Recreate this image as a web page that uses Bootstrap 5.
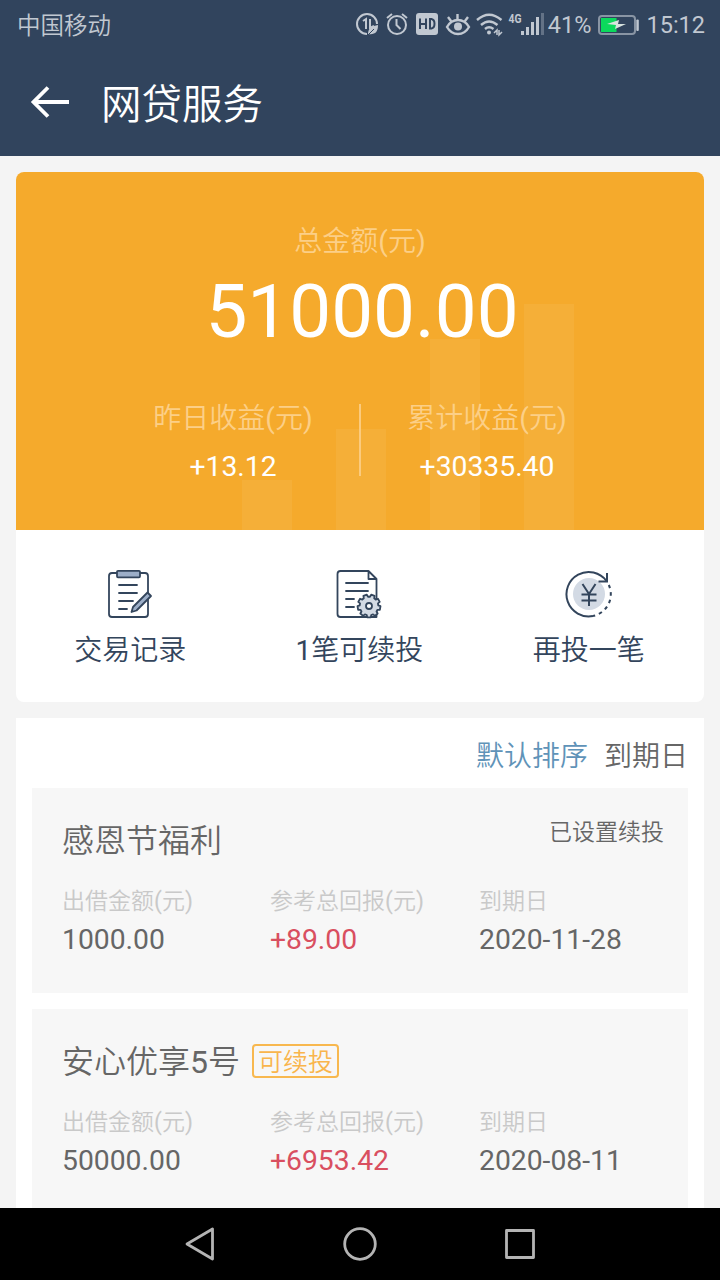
<!DOCTYPE html>
<html lang="zh-CN">
<head>
<meta charset="utf-8">
<meta name="viewport" content="width=device-width, initial-scale=1">
<title>网贷服务</title>
<link href="https://cdn.jsdelivr.net/npm/bootstrap@5.3.0/dist/css/bootstrap.min.css" rel="stylesheet">
<style>
  :root { --navy: #31445d; --amber: #f5aa2c; }
  body { font-family: Roboto, "Noto Sans CJK SC", sans-serif; font-weight: 400; background: #f4f4f4; color: #666; width: 720px; height: 1280px; }
  svg { display: block; flex: none; }
  .cjk { font-weight: 350; }
  .num { font-weight: 400; }
  .status-strip { height: 50px; padding: 0 15px 0 17px; color: #c1c8d1; font-size: 23.5px; line-height: 51px; background: var(--navy); }
  .status-strip .cjk { line-height: 53px; }
  .title-strip { height: 106px; background: var(--navy); padding-left: 30px; gap: 31px; color: #fff; }
  .title-strip svg { margin-bottom: 2px; }
  .title-strip h1 { font-size: 40.5px; line-height: 106px; padding-top: 4px; }
  .panel { margin: 16px 16px 0; background: #fff; }
  .summary { border-radius: 8px; height: 530px; }
  .hero { height: 358px; background: var(--amber); color: #fff; padding-top: 49px; }
  .hero-label { color: #fccf87; font-size: 28px; line-height: 42px; }
  .hero-total { font-size: 74.6px; line-height: 97px; padding-left: 4px; }
  .hero-bars { inset: 0 130px 0 226px; gap: 44px; }
  .hero-bars span { width: 50px; background: rgba(255,255,255,.06); }
  .hero-split { margin-top: 44px; }
  .hero-split .half { width: 252px; margin-top: -6px; }
  .hero-split .rule { width: 2px; height: 72px; background: #fbcb7e; }
  .hero-value { font-size: 28.3px; line-height: 40px; margin-top: 7px; }
  .actions { height: 172px; padding-top: 38px; color: #33455c; font-size: 28px; line-height: 42px; }
  .actions svg { margin-bottom: 10px; }
  .actions .col > span { margin-left: -1px; }
  .sort { height: 70px; padding-right: 16px; gap: 16px; font-size: 28px; line-height: 77px; }
  .sort .current { color: #5f93b8; }
  .loan { margin: 0 16px 16px; background: #f7f7f7; height: 205px; padding: 31px 24px 0 30px; }
  .loan-name { font-size: 32px; line-height: 44px; height: 42px; }
  .loan-state { font-size: 23px; line-height: 28px; }
  .loan-tag { border: 2px solid #f8b84f; border-radius: 4px; color: #f9b54c; font-size: 25px; line-height: 34px; height: 34px; width: 87px; margin: 4px 0 0 12px; }
  .loan-grid { display: grid; grid-template-columns: 208px 209px 1fr; margin-top: 23px; }
  .loan-grid dt { color: #c9c9c9; font-size: 23px; line-height: 36px; }
  .loan-grid dd { font-size: 28.3px; line-height: 40px; margin: 0; }
  .gain { color: #d94f60; }
  .sys-nav { height: 72px; background: #000; }
</style>
</head>
<body class="d-flex flex-column overflow-hidden m-0">
<header class="flex-shrink-0">
  <div class="status-strip d-flex justify-content-between">
    <span class="cjk">中国移动</span>
    <div class="d-flex align-items-center">
      <svg width="190" height="50" viewBox="350 0 190 50" fill="none" stroke="#c1c8d1" stroke-width="2">
        <path d="M367 34A10 10 0 1 1 377 24" /><path d="M363 21l3-2v10M370 19v9l4-2" />
        <path d="M368 34c0-6 4-8 10-9 0 7-3 10-10 9z" fill="#c1c8d1" stroke="none"/><path d="M368 35l6-6" stroke="#31445d" stroke-width="1"/>
        <circle cx="397" cy="25" r="9"/><path d="M396.500 19v6l4 4M387 18l5-4M407 18l-5-4"/>
        <rect x="416" y="13" width="22" height="22" rx="3" fill="#c1c8d1" stroke="none"/>
        <path d="M420 18.500v10.500M426 18.500v10.500M420 24h6M430 19v9.500h1.500q3-.5 3-4.700t-3-4.800z" stroke="#31445d"/>
        <path d="M447 27q4-7 11-7t11 7q-4 7-11 7t-11-7zM457.500 14v5M448 17l3 4M468 17l-3 4" stroke-width="2.400"/><circle cx="458" cy="26.500" r="4" fill="#c1c8d1" stroke="none"/>
        <path d="M477 20q12-10.500 24.500 0M481 25q8-7 16.500 0M485 29q4-3.500 8.500 0" stroke-width="2.400"/><circle cx="489" cy="32.500" r="2" fill="#c1c8d1" stroke="none"/>
        <path d="M494 33l3-3v5M499 30v5l3-3" stroke-width="1.500"/>
        <text x="508.500" y="23" font-family="Roboto, sans-serif" font-size="12.500" font-weight="700" textLength="13" lengthAdjust="spacingAndGlyphs" fill="#c1c8d1" stroke="none">4G</text>
        <path d="M522.500 31v4M527.500 27v8M532.500 22v13M537.500 17v18" stroke-width="3"/>
      </svg>
      <svg width="5" height="50" viewBox="540 0 5 50"><rect x="541" y="13" width="3" height="22" fill="#637286"/></svg>
      <span style="margin-left:3px">41%</span>
      <svg style="margin-left:7px" width="42" height="50" viewBox="598 0 42 50">
        <rect x="599" y="16" width="36" height="18" rx="3" fill="none" stroke="#8995a4" stroke-width="2"/>
        <rect x="601" y="18" width="15.500" height="14" fill="#0bd95c"/>
        <path d="M607 24l12-4-1 4h8l-11 5 1-4z" fill="#d8e3df"/><rect x="636.300" y="19.500" width="2.500" height="11.500" rx="1" fill="#c1c8d1"/>
      </svg>
      <span style="margin-left:6px">15:12</span>
    </div>
  </div>
  <div class="title-strip d-flex align-items-center">
    <svg width="40" height="32" viewBox="31 86 40 32" fill="none" stroke="#fff" stroke-width="3.800"><path d="M70 102H35M49 87.500L34.500 102 49 116.500"/></svg>
    <h1 class="cjk m-0">网贷服务</h1>
  </div>
</header>

<main class="flex-grow-1 overflow-hidden" style="min-height:0">
  <section class="panel summary overflow-hidden">
    <div class="hero position-relative text-center">
      <div class="hero-bars position-absolute d-flex align-items-end">
        <span style="height:50px"></span><span style="height:101px"></span><span style="height:191px"></span><span style="height:226px"></span>
      </div>
      <div class="position-relative">
        <div class="hero-label cjk">总金额<span class="num">(</span>元<span class="num">)</span></div>
        <div class="hero-total">51000.00</div>
        <div class="hero-split d-flex justify-content-center">
          <div class="half"><div class="hero-label cjk">昨日收益<span class="num">(</span>元<span class="num">)</span></div><div class="hero-value">+13.12</div></div>
          <div class="rule"></div>
          <div class="half"><div class="hero-label cjk">累计收益<span class="num">(</span>元<span class="num">)</span></div><div class="hero-value">+30335.40</div></div>
        </div>
      </div>
    </div>
    <div class="actions row g-0 text-center cjk">
      <div class="col d-flex flex-column align-items-center">
        <svg width="50" height="52" viewBox="106 568 50 52" fill="none" stroke="#33455c" stroke-width="1.800" stroke-linecap="round" stroke-linejoin="round">
          <rect x="109" y="573" width="39" height="44" rx="3"/><rect x="117" y="570.800" width="23" height="6.500" rx="1" fill="#9caec8"/>
          <path d="M119 585h18M119 593h18M119 601h14M119 609h8"/>
          <path d="M131.500 612l1.500-5 14.500-14.500 3.500 3.500L136.500 610.500z" fill="#9caec8"/>
        </svg>
        <span>交易记录</span>
      </div>
      <div class="col d-flex flex-column align-items-center">
        <svg width="50" height="52" viewBox="335 568 50 52" fill="none" stroke="#33455c" stroke-width="1.800" stroke-linecap="round" stroke-linejoin="round">
          <path d="M376.500 579v38h-36q-3 0-3-3v-40q0-3 3-3h28l8 8h-8v-8"/>
          <path d="M346 583h22M346 591h22M346 599h8M346 607h8"/>
          <path id="gear" fill="#d3dae4"/><circle cx="369" cy="606" r="3" fill="#fff"/>
        </svg>
        <span><span class="num">1</span>笔可续投</span>
      </div>
      <div class="col d-flex flex-column align-items-center">
        <svg width="50" height="52" viewBox="564 568 50 52" fill="none" stroke="#33455c" stroke-width="2">
          <circle cx="589" cy="594" r="16" fill="#d3dae4" stroke="none"/>
          <path d="M593 616A22.200 22.200 0 1 1 606.500 581"/><path d="M598.500 581.500h8.500v-8.500"/>
          <path d="M608.800 585A22.200 22.200 0 0 1 593 616" stroke-dasharray="3.500 4"/>
          <path d="M582.500 584l6.500 10 6.500-10M589 594v12M581.500 594.500h15M581.500 600.500h15"/>
        </svg>
        <span>再投一笔</span>
      </div>
    </div>
  </section>

  <section class="panel">
    <div class="sort d-flex justify-content-end cjk"><span class="current">默认排序</span><span>到期日</span></div>
    <article class="loan">
      <div class="d-flex justify-content-between"><div class="loan-name cjk">感恩节福利</div><div class="loan-state cjk">已设置续投</div></div>
      <dl class="loan-grid mb-0">
        <div><dt class="cjk">出借金额<span class="num">(</span>元<span class="num">)</span></dt><dd>1000.00</dd></div>
        <div><dt class="cjk">参考总回报<span class="num">(</span>元<span class="num">)</span></dt><dd class="gain">+89.00</dd></div>
        <div><dt class="cjk">到期日</dt><dd>2020-11-28</dd></div>
      </dl>
    </article>
    <article class="loan">
      <div class="d-flex"><div class="loan-name cjk">安心优享<span class="num">5</span>号</div><div class="loan-tag cjk text-center">可续投</div></div>
      <dl class="loan-grid mb-0">
        <div><dt class="cjk">出借金额<span class="num">(</span>元<span class="num">)</span></dt><dd>50000.00</dd></div>
        <div><dt class="cjk">参考总回报<span class="num">(</span>元<span class="num">)</span></dt><dd class="gain">+6953.42</dd></div>
        <div><dt class="cjk">到期日</dt><dd>2020-08-11</dd></div>
      </dl>
    </article>
  </section>
</main>

<nav class="sys-nav flex-shrink-0 d-flex justify-content-center">
  <svg width="400" height="72" viewBox="160 1208 400 72" fill="none" stroke="#b4b4b4" stroke-width="2.800" stroke-linejoin="round">
    <path d="M187 1244l25.500-15v30z"/><circle cx="360" cy="1244" r="15.300"/><rect x="506.500" y="1230.500" width="27" height="27"/>
  </svg>
</nav>
<script>
  // Nine-tooth gear outline around (369, 606)
  const pts = [];
  for (let i = 0; i < 9; i++) {
    [[-14, 9.3], [-9, 11.5], [9, 11.5], [14, 9.3]].forEach(([d, r]) => {
      const a = (i * 40 + 20 + d - 90) * Math.PI / 180;
      pts.push((369 + r * Math.cos(a)).toFixed(2) + ' ' + (606 + r * Math.sin(a)).toFixed(2));
    });
  }
  document.getElementById('gear').setAttribute('d', 'M' + pts.join('L') + 'Z');
</script>
<script src="https://cdn.jsdelivr.net/npm/bootstrap@5.3.0/dist/js/bootstrap.bundle.min.js"></script>
</body>
</html>
